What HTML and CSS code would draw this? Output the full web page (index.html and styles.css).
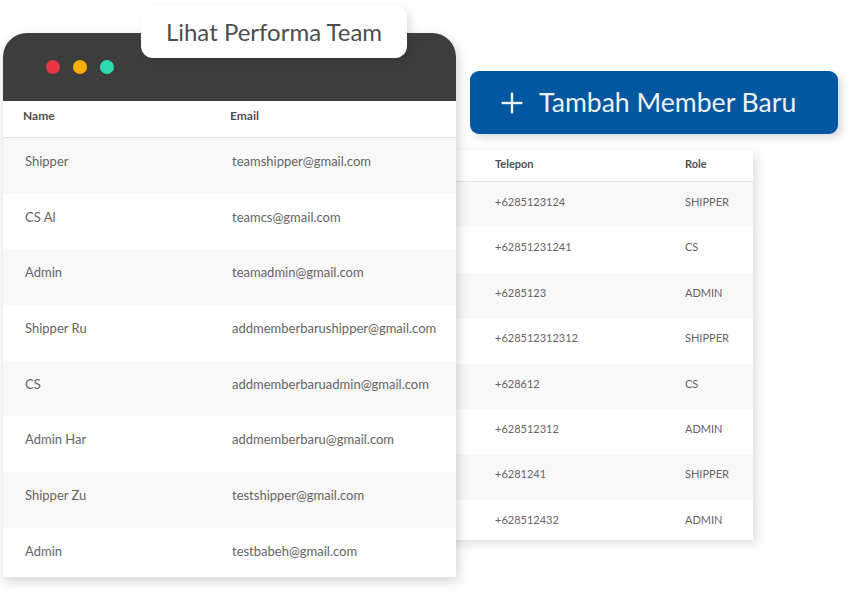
FILE: index.html
```html
<!DOCTYPE html>
<html lang="id">
<head>
    <meta charset="UTF-8">
    <meta name="viewport" content="width=device-width, initial-scale=1.0">
    <title>Team</title>
    <link rel="stylesheet" href="styles.css">
</head>
<body>
    <div class="stage">
        <!-- tabel belakang: telepon & role -->
        <div class="panel panel-back">
            <div class="back-row back-head">
                <span>Telepon</span>
                <span>Role</span>
            </div>
            <div class="back-row"><span>+6285123124</span><span>SHIPPER</span></div>
            <div class="back-row"><span>+62851231241</span><span>CS</span></div>
            <div class="back-row"><span>+6285123</span><span>ADMIN</span></div>
            <div class="back-row"><span>+628512312312</span><span>SHIPPER</span></div>
            <div class="back-row"><span>+628612</span><span>CS</span></div>
            <div class="back-row"><span>+628512312</span><span>ADMIN</span></div>
            <div class="back-row"><span>+6281241</span><span>SHIPPER</span></div>
            <div class="back-row"><span>+628512432</span><span>ADMIN</span></div>
        </div>

        <!-- jendela utama -->
        <div class="panel window">
            <div class="window-bar">
                <span class="dot red"></span>
                <span class="dot yellow"></span>
                <span class="dot green"></span>
            </div>
            <div class="team-row team-head">
                <span>Name</span>
                <span>Email</span>
            </div>
            <div class="team-row"><span>Shipper</span><span>teamshipper@gmail.com</span></div>
            <div class="team-row"><span>CS Al</span><span>teamcs@gmail.com</span></div>
            <div class="team-row"><span>Admin</span><span>teamadmin@gmail.com</span></div>
            <div class="team-row"><span>Shipper Ru</span><span>addmemberbarushipper@gmail.com</span></div>
            <div class="team-row"><span>CS</span><span>addmemberbaruadmin@gmail.com</span></div>
            <div class="team-row"><span>Admin Har</span><span>addmemberbaru@gmail.com</span></div>
            <div class="team-row"><span>Shipper Zu</span><span>testshipper@gmail.com</span></div>
            <div class="team-row"><span>Admin</span><span>testbabeh@gmail.com</span></div>
        </div>

        <div class="tab-label">Lihat Performa Team</div>

        <button class="add-button">
            <svg viewBox="0 0 24 24" fill="none" stroke="currentColor" stroke-width="2.6" stroke-linecap="square">
                <line x1="12" y1="2" x2="12" y2="22"></line>
                <line x1="2" y1="12" x2="22" y2="12"></line>
            </svg>
            <span>Tambah Member Baru</span>
        </button>
    </div>
</body>
</html>
```

FILE: styles.css
```css
:root {
    --text: #646464;
    --head: #4f4f4f;
    --stripe: #f8f8f8;
    --line: #e2e2e2;
    --bar: #3d3d3d;
    --blue: #0157a0;
}

* {
    margin: 0;
    padding: 0;
    box-sizing: border-box;
    font-family: "Lato", "Noto Sans", sans-serif;
}

body {
    background: #ffffff;
    width: 856px;
    height: 600px;
    overflow: hidden;
}

.stage {
    position: relative;
    width: 856px;
    height: 600px;
}

.panel {
    position: absolute;
    background: #ffffff;
    overflow: hidden;
}

/* tabel belakang */
.panel-back {
    left: 380px;
    top: 150px;
    width: 373px;
    height: 390px;
    overflow: visible;
    box-shadow: 4px 4px 10px rgba(0, 0, 0, 0.12);
}

.back-row {
    display: grid;
    grid-template-columns: 189px 1fr;
    padding-left: 115px;
    height: 45.4px;
    padding-top: 13px;
    font-size: 11px;
    color: var(--text);
}

.back-row:nth-child(even) {
    background: var(--stripe);
}

.back-head {
    height: 32px;
    padding-top: 7px;
    font-weight: 700;
    color: var(--head);
    border-bottom: 1px solid var(--line);
}

.back-row span:last-child {
    padding-left: 1px;
}

/* jendela utama */
.window {
    left: 3px;
    top: 33px;
    width: 453px;
    height: 544px;
    border-radius: 24px 24px 0 0;
    box-shadow: 2px 4px 12px rgba(0, 0, 0, 0.18);
}

.window-bar {
    height: 68px;
    background: var(--bar);
    display: flex;
    align-items: center;
    gap: 13px;
    padding-left: 43px;
    padding-bottom: 1px;
}

.dot {
    width: 14px;
    height: 14px;
    border-radius: 50%;
}

.dot.red { background: #e8354a; }
.dot.yellow { background: #f9b000; }
.dot.green { background: #2ed8b3; }

.team-row {
    display: grid;
    grid-template-columns: 207px 1fr;
    padding-left: 22px;
    height: 55.7px;
    padding-top: 15px;
    font-size: 13px;
    color: var(--text);
}

.team-row:nth-child(odd) {
    background: var(--stripe);
}

.team-head {
    height: 37px;
    padding-top: 7px;
    padding-left: 20px;
    font-size: 12px;
    font-weight: 700;
    color: var(--head);
    background: #ffffff;
    border-bottom: 1px solid var(--line);
}

/* label judul */
.tab-label {
    position: absolute;
    left: 141px;
    top: 5px;
    width: 266px;
    height: 53px;
    background: #ffffff;
    border-radius: 12px;
    box-shadow: 4px 3px 8px rgba(0, 0, 0, 0.1);
    display: flex;
    align-items: center;
    justify-content: center;
    font-size: 24px;
    color: #4e4e4e;
}

/* tombol tambah */
.add-button {
    position: absolute;
    left: 470px;
    top: 71px;
    width: 368px;
    height: 63px;
    border: none;
    border-radius: 9px;
    background: var(--blue);
    color: #edf1f6;
    box-shadow: 4px 4px 8px rgba(0, 0, 0, 0.15);
    display: flex;
    align-items: center;
    gap: 16px;
    padding-left: 31px;
    font-size: 26.6px;
}

.add-button svg {
    width: 22px;
    height: 22px;
}

.add-button span {
    font-family: "Lato", "Noto Sans", sans-serif;
    padding-bottom: 2px;
}
```
